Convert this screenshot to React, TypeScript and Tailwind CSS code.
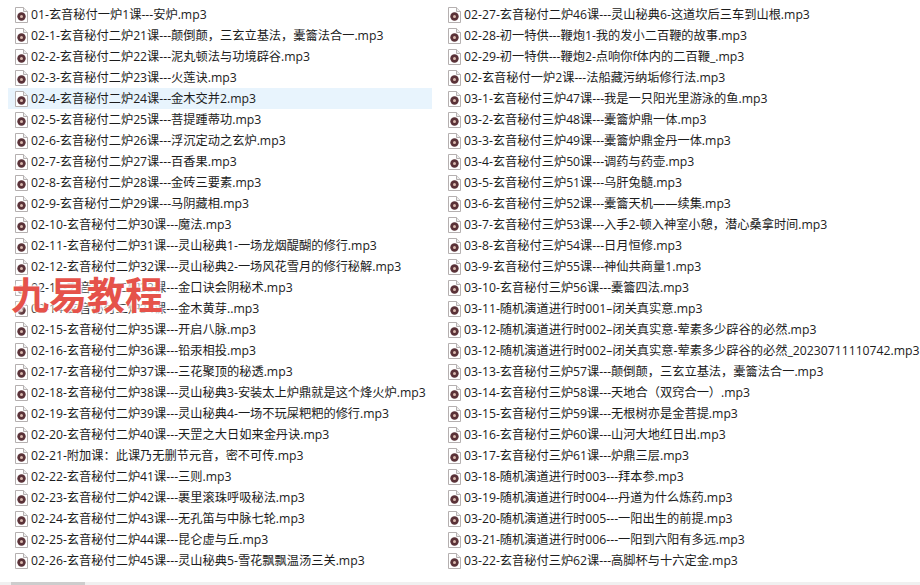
const leftFiles = [
  "01-玄音秘付一炉1课---安炉.mp3",
  "02-1-玄音秘付二炉21课---颠倒颠，三玄立基法，橐籥法合一.mp3",
  "02-2-玄音秘付二炉22课---泥丸顿法与功境辟谷.mp3",
  "02-3-玄音秘付二炉23课---火莲诀.mp3",
  "02-4-玄音秘付二炉24课---金木交并2.mp3",
  "02-5-玄音秘付二炉25课---菩提踵蒂功.mp3",
  "02-6-玄音秘付二炉26课---浮沉定动之玄炉.mp3",
  "02-7-玄音秘付二炉27课---百香果.mp3",
  "02-8-玄音秘付二炉28课---金砖三要素.mp3",
  "02-9-玄音秘付二炉29课---马阴藏相.mp3",
  "02-10-玄音秘付二炉30课---魔法.mp3",
  "02-11-玄音秘付二炉31课---灵山秘典1-一场龙烟醍醐的修行.mp3",
  "02-12-玄音秘付二炉32课---灵山秘典2-一场风花雪月的修行秘解.mp3",
  "02-13-玄音秘付二炉33课---金口诀会阴秘术.mp3",
  "02-14-玄音秘付二炉34课---金木黄芽..mp3",
  "02-15-玄音秘付二炉35课---开启八脉.mp3",
  "02-16-玄音秘付二炉36课---铅汞相投.mp3",
  "02-17-玄音秘付二炉37课---三花聚顶的秘透.mp3",
  "02-18-玄音秘付二炉38课---灵山秘典3-安装太上炉鼎就是这个烽火炉.mp3",
  "02-19-玄音秘付二炉39课---灵山秘典4-一场不玩屎粑粑的修行.mp3",
  "02-20-玄音秘付二炉40课---天罡之大日如来金丹诀.mp3",
  "02-21-附加课：此课乃无删节元音，密不可传.mp3",
  "02-22-玄音秘付二炉41课---三则.mp3",
  "02-23-玄音秘付二炉42课---裹里滚珠呼吸秘法.mp3",
  "02-24-玄音秘付二炉43课---无孔笛与中脉七轮.mp3",
  "02-25-玄音秘付二炉44课---昆仑虚与丘.mp3",
  "02-26-玄音秘付二炉45课---灵山秘典5-雪花飘飘温汤三关.mp3",
];

const rightFiles = [
  "02-27-玄音秘付二炉46课---灵山秘典6-这道坎后三车到山根.mp3",
  "02-28-初一特供---鞭炮1-我的发小二百鞭的故事.mp3",
  "02-29-初一特供---鞭炮2-点响你f体内的二百鞭_.mp3",
  "02-玄音秘付一炉2课---法船藏污纳垢修行法.mp3",
  "03-1-玄音秘付三炉47课---我是一只阳光里游泳的鱼.mp3",
  "03-2-玄音秘付三炉48课---橐籥炉鼎一体.mp3",
  "03-3-玄音秘付三炉49课---橐籥炉鼎金丹一体.mp3",
  "03-4-玄音秘付三炉50课---调药与药壶.mp3",
  "03-5-玄音秘付三炉51课---乌肝兔髓.mp3",
  "03-6-玄音秘付三炉52课---橐籥天机——续集.mp3",
  "03-7-玄音秘付三炉53课---入手2-顿入神室小憩，潜心桑拿时间.mp3",
  "03-8-玄音秘付三炉54课---日月恒修.mp3",
  "03-9-玄音秘付三炉55课---神仙共商量1.mp3",
  "03-10-玄音秘付三炉56课---橐籥四法.mp3",
  "03-11-随机演道进行时001–闭关真实意.mp3",
  "03-12-随机演道进行时002–闭关真实意-荤素多少辟谷的必然.mp3",
  "03-12-随机演道进行时002–闭关真实意-荤素多少辟谷的必然_20230711110742.mp3",
  "03-13-玄音秘付三炉57课---颠倒颠，三玄立基法，橐籥法合一.mp3",
  "03-14-玄音秘付三炉58课---天地合（双窍合一）.mp3",
  "03-15-玄音秘付三炉59课---无根树亦是金菩提.mp3",
  "03-16-玄音秘付三炉60课---山河大地红日出.mp3",
  "03-17-玄音秘付三炉61课---炉鼎三层.mp3",
  "03-18-随机演道进行时003---拜本参.mp3",
  "03-19-随机演道进行时004---丹道为什么炼药.mp3",
  "03-20-随机演道进行时005---一阳出生的前提.mp3",
  "03-21-随机演道进行时006---一阳到六阳有多远.mp3",
  "03-22-玄音秘付三炉62课---高脚杯与十六定金.mp3",
];

const Mp3Icon = () => (
  <svg width="13" height="16" viewBox="0 0 13 16" className="shrink-0">
    <path d="M0.5 0.5H8.5L12.5 4.5V15.5H0.5Z" fill="#fff" stroke="#b5b0b0" />
    <path d="M8.5 0.5V4.5H12.5" fill="#eee" stroke="#b5b0b0" />
    <circle cx="6.5" cy="9.5" r="4.2" fill="#5a3238" />
    <circle cx="6.5" cy="9.5" r="1.5" fill="#d9b9ae" />
  </svg>
);

const FileRow = ({ name, selected }: { name: string; selected?: boolean }) => (
  <div
    className={`flex h-[21px] items-center gap-[3px] pl-[7px] ${selected ? "bg-[#e8f4fd]" : ""}`}
  >
    <Mp3Icon />
    <span className="whitespace-nowrap text-[12.22px] leading-[21px] text-[#1c1c1c]">{name}</span>
  </div>
);

export default function App() {
  return (
    <div className="relative flex h-[585px] w-[920px] flex-col overflow-hidden bg-white font-['Open_Sans','Noto_Sans_CJK_SC',sans-serif]">
      <div className="flex flex-1 pl-2 pt-1">
        <div className="mr-[9px] w-[424px]">
          {leftFiles.map((name) => (
            <FileRow key={name} name={name} selected={name.startsWith("02-4-")} />
          ))}
        </div>
        <div className="w-[479px]">
          {rightFiles.map((name, i) => (
            <FileRow key={i} name={name} />
          ))}
        </div>
      </div>

      {/* horizontal scrollbar */}
      <div className="h-[3px] bg-[#f0f0f0] pl-[11px]">
        <div className="h-full w-[74px] bg-[#cdcdcd]" />
      </div>

      {/* watermark */}
      <div className="absolute left-[11px] top-[270px] whitespace-nowrap font-['Noto_Sans_CJK_SC',sans-serif] text-[38px] font-bold leading-[46px] text-[#e5524a] [text-shadow:0_0_3px_#fff,0_0_3px_#fff,0_0_5px_#fff]">
        九易教程
      </div>
    </div>
  );
}
